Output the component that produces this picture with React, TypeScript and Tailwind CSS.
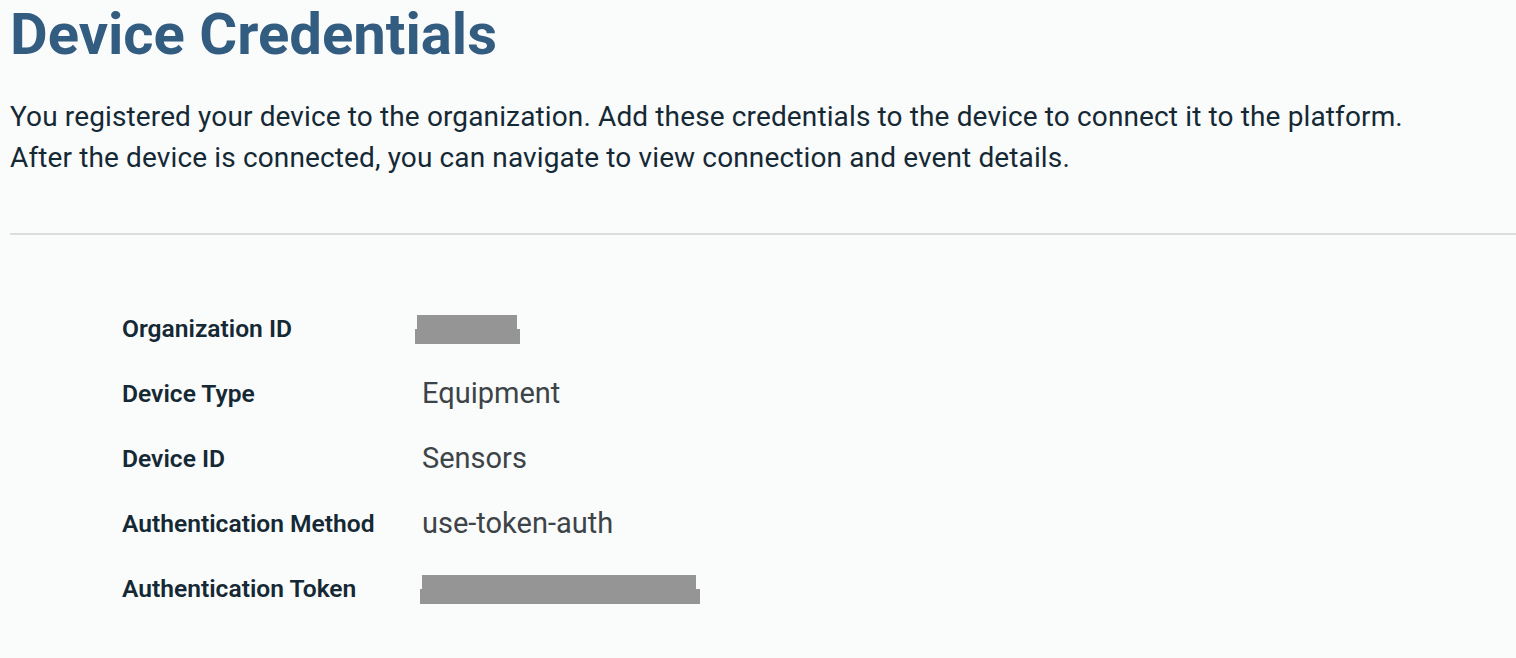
import React from "react";

const rows: { label: string; value?: string; redact?: "org" | "token" }[] = [
  { label: "Organization ID", redact: "org" },
  { label: "Device Type", value: "Equipment" },
  { label: "Device ID", value: "Sensors" },
  { label: "Authentication Method", value: "use-token-auth" },
  { label: "Authentication Token", redact: "token" },
];

export default function App() {
  return (
    <div
      className="w-[1516px] h-[658px] overflow-hidden bg-[#fafbfb] text-[#152935]"
      style={{ fontFamily: "Roboto, 'Open Sans', sans-serif" }}
    >
      <div className="pl-[10px]">
        <h1 className="text-[58px] leading-[68px] font-bold text-[#325c80]">Device Credentials</h1>
        <p className="mt-[28px] text-[28px] leading-[41px] tracking-[0.13px] text-[#152935]">
          You registered your device to the organization. Add these credentials to the device to connect it to the platform.
          <br />
          After the device is connected, you can navigate to view connection and event details.
        </p>
        <div className="mt-[55px] h-[2px] bg-[#dcdede]" />
      </div>
      <div className="pl-[122px] pt-[76px] flex flex-col gap-[29px]">
        {rows.map((r) => (
          <div key={r.label} className="flex items-center h-[36px]">
            <div className="w-[300px] text-[24.6px] font-semibold text-[#152935]">{r.label}</div>
            {r.value && <div className="text-[29px] text-[#3d4448]">{r.value}</div>}
            {r.redact === "org" && (
              <div className="flex flex-col -ml-[7px]">
                <div className="ml-[2px] w-[100px] h-[16px] bg-[#959595]" />
                <div className="-mt-[2px] w-[105px] h-[15px] bg-[#959595]" />
              </div>
            )}
            {r.redact === "token" && (
              <div className="flex flex-col -ml-[2px]">
                <div className="ml-[2px] w-[274px] h-[16px] bg-[#959595]" />
                <div className="-mt-[2px] w-[280px] h-[15px] bg-[#959595]" />
              </div>
            )}
          </div>
        ))}
      </div>
    </div>
  );
}
